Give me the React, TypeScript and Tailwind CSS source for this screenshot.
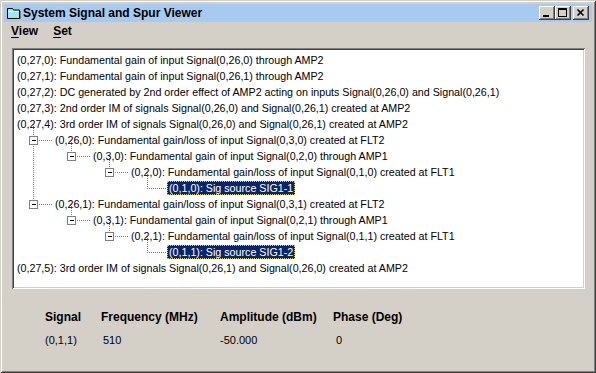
import React from "react";

type Row = {
  level: number;
  text: string;
  expand?: boolean;
  selected?: boolean;
};

const rows: Row[] = [
  { level: 0, text: "(0,27,0): Fundamental gain of input Signal(0,26,0) through AMP2" },
  { level: 0, text: "(0,27,1): Fundamental gain of input Signal(0,26,1) through AMP2" },
  {
    level: 0,
    text: "(0,27,2): DC generated by 2nd order effect of AMP2 acting on inputs Signal(0,26,0) and Signal(0,26,1)",
  },
  { level: 0, text: "(0,27,3): 2nd order IM of signals Signal(0,26,0) and Signal(0,26,1) created at AMP2" },
  { level: 0, text: "(0,27,4): 3rd order IM of signals Signal(0,26,0) and Signal(0,26,1) created at AMP2" },
  { level: 1, expand: true, text: "(0,26,0): Fundamental gain/loss of input Signal(0,3,0) created at FLT2" },
  { level: 2, expand: true, text: "(0,3,0): Fundamental gain of input Signal(0,2,0) through AMP1" },
  { level: 3, expand: true, text: "(0,2,0): Fundamental gain/loss of input Signal(0,1,0) created at FLT1" },
  { level: 4, selected: true, text: "(0,1,0): Sig source SIG1-1" },
  { level: 1, expand: true, text: "(0,26,1): Fundamental gain/loss of input Signal(0,3,1) created at FLT2" },
  { level: 2, expand: true, text: "(0,3,1): Fundamental gain of input Signal(0,2,1) through AMP1" },
  { level: 3, expand: true, text: "(0,2,1): Fundamental gain/loss of input Signal(0,1,1) created at FLT1" },
  { level: 4, selected: true, text: "(0,1,1): Sig source SIG1-2" },
  { level: 0, text: "(0,27,5): 3rd order IM of signals Signal(0,26,1) and Signal(0,26,0) created at AMP2" },
];

// vertical connector runs: [level, fromRow, toRow]
const runs: [number, number, number][] = [
  [1, 4, 9],
  [2, 5, 6],
  [2, 9, 10],
  [3, 6, 7],
  [3, 10, 11],
  [4, 7, 8],
  [4, 11, 12],
];

const ROW = 16;
const btnX = (level: number) => 19 + 38 * (level - 1);
const labelX = (level: number) => 1 + 38 * level;
const midY = (i: number) => i * ROW + 8;

function TreeLines() {
  return (
    <svg className="absolute left-0 top-0 pointer-events-none" width="560" height="230">
      <g stroke="#808080" strokeWidth="1" strokeDasharray="1 1" fill="none">
        {runs.map(([lvl, a, b], k) => (
          <line key={k} x1={btnX(lvl) + 0.5} y1={midY(a)} x2={btnX(lvl) + 0.5} y2={midY(b)} />
        ))}
        {rows.map((r, i) =>
          r.level > 0 ? (
            <line key={"h" + i} x1={btnX(r.level)} y1={midY(i) + 0.5} x2={labelX(r.level) - 1} y2={midY(i) + 0.5} />
          ) : null
        )}
      </g>
      {rows.map((r, i) =>
        r.expand ? (
          <g key={"b" + i}>
            <rect x={btnX(r.level) - 3.5} y={midY(i) - 3.5} width="8" height="8" fill="#fff" stroke="#808080" />
            <line x1={btnX(r.level) - 1} y1={midY(i) + 0.5} x2={btnX(r.level) + 3} y2={midY(i) + 0.5} stroke="#000" />
          </g>
        ) : null
      )}
    </svg>
  );
}

function CaptionButton({ kind }: { kind: "min" | "max" | "close" }) {
  return (
    <div className="w-[16px] h-[14px] bg-[#d4d0c8] shadow-[inset_-1px_-1px_#404040,inset_1px_1px_#fff,inset_-2px_-2px_#808080] flex items-center justify-center">
      <svg width="16" height="14" viewBox="0 0 16 14">
        {kind === "min" && <rect x="4" y="9" width="6" height="2" fill="#000" />}
        {kind === "max" && (
          <g fill="none" stroke="#000">
            <rect x="3.5" y="2.5" width="8" height="8" />
            <line x1="3" y1="3.5" x2="12" y2="3.5" />
          </g>
        )}
        {kind === "close" && (
          <g stroke="#000" strokeWidth="1.6">
            <line x1="4.5" y1="3.5" x2="10.5" y2="9.5" />
            <line x1="10.5" y1="3.5" x2="4.5" y2="9.5" />
          </g>
        )}
      </svg>
    </div>
  );
}

function AppIcon() {
  return (
    <svg width="16" height="16" viewBox="0 0 16 16">
      <path d="M1.5 3.5h5l1 1.5h6v8.5h-12z" fill="#9fe8f0" stroke="#000" />
      <path d="M2.5 6.5h10" stroke="#fff" />
      <path d="M14.5 6v8" stroke="#808080" />
    </svg>
  );
}

export default function App() {
  const font = "font-['Liberation_Sans',Arial,sans-serif]";
  return (
    <div
      className={`w-[596px] h-[373px] bg-[#d4d0c8] p-[4px] flex flex-col ${font} shadow-[inset_1px_1px_#d4d0c8,inset_-1px_-1px_#404040,inset_2px_2px_#fff,inset_-2px_-2px_#808080]`}
    >
      {/* title bar */}
      <div className="h-[18px] bg-[#a6caf0] flex items-center pl-[2px] pr-[3px]">
        <AppIcon />
        <span className="ml-[1px] text-[12px] font-bold text-black leading-none">System Signal and Spur Viewer</span>
        <div className="ml-auto flex items-center">
          <CaptionButton kind="min" />
          <CaptionButton kind="max" />
          <div className="w-[2px]" />
          <CaptionButton kind="close" />
        </div>
      </div>

      {/* menu bar */}
      <div className="h-[18px] flex items-center pl-[7px] text-[12px] font-bold text-black">
        <span className="mr-[15px]">
          <span className="underline underline-offset-2">V</span>iew
        </span>
        <span>
          <span className="underline underline-offset-2">S</span>et
        </span>
      </div>

      {/* tree view */}
      <div className="mt-[8px] ml-[8px] w-[573px] h-[241px] bg-white shadow-[inset_1px_1px_#808080,inset_-1px_-1px_#fff,inset_2px_2px_#404040,inset_-2px_-2px_#d4d0c8] pt-[4px] pl-[2px] overflow-hidden">
        <div className="relative">
          <TreeLines />
          {rows.map((r, i) => (
            <div key={i} className="h-[16px] flex items-center" style={{ paddingLeft: labelX(r.level) }}>
              <span
                className={
                  r.selected
                    ? "relative px-[2px] h-[14px] flex items-center bg-[#0a246a] text-white text-[10.7px] whitespace-nowrap outline outline-1 outline-dotted outline-[#d8c860] -outline-offset-1"
                    : "relative px-[2px] h-[14px] flex items-center text-black text-[10.7px] whitespace-nowrap"
                }
              >
                {r.text}
              </span>
            </div>
          ))}
        </div>
      </div>

      {/* details */}
      <div className="mt-[20px] pl-[41px] text-[12px] text-black">
        <div className="flex font-bold h-[16px] items-center">
          <span className="w-[56px]">Signal</span>
          <span className="w-[119px]">Frequency (MHz)</span>
          <span className="w-[113px]">Amplitude (dBm)</span>
          <span>Phase (Deg)</span>
        </div>
        <div className="flex h-[16px] items-center mt-[7px] text-[11px]">
          <span className="w-[56px]">(0,1,1)</span>
          <span className="w-[119px] pl-[2px]">510</span>
          <span className="w-[113px]">-50.000</span>
          <span className="pl-[3px]">0</span>
        </div>
      </div>
    </div>
  );
}
